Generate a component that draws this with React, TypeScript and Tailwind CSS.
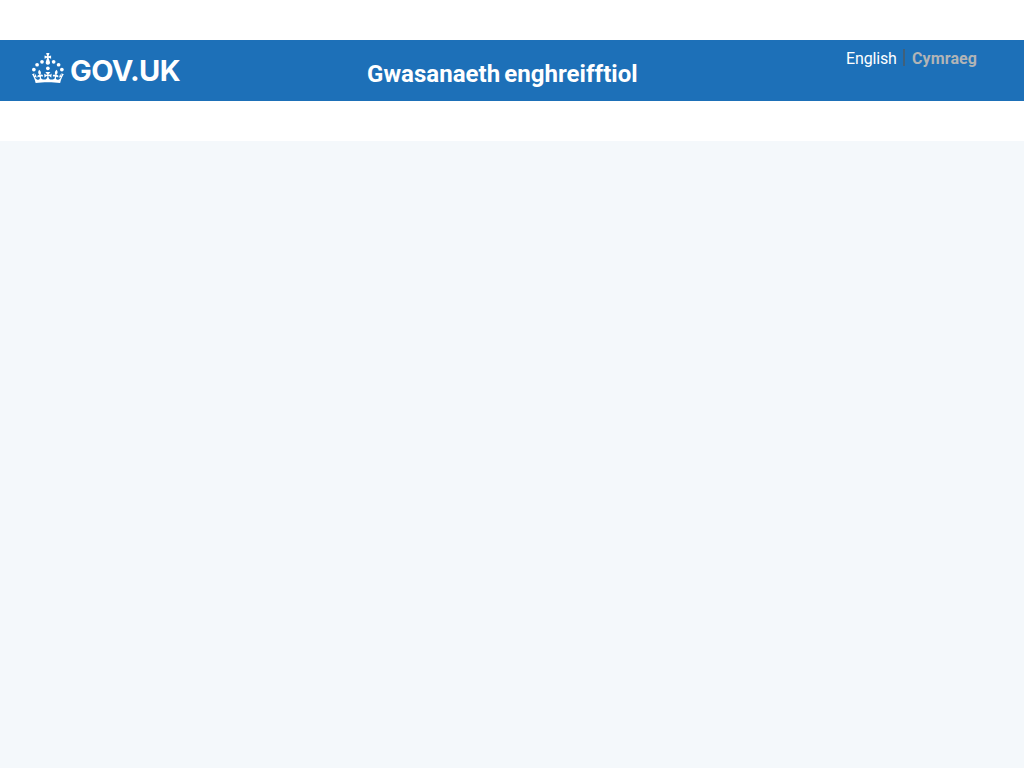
function Crown() {
  return (
    <svg width="32" height="30" viewBox="0 0 64 60" fill="currentColor" aria-hidden="true" className="shrink-0">
      <circle cx="20" cy="17.6" r="3.7" />
      <circle cx="10.2" cy="23.5" r="3.7" />
      <circle cx="3.7" cy="33.2" r="3.7" />
      <circle cx="31.7" cy="30.6" r="3.7" />
      <circle cx="43.3" cy="17.6" r="3.7" />
      <circle cx="53.2" cy="23.5" r="3.7" />
      <circle cx="59.7" cy="33.2" r="3.7" />
      <path d="M33.1,9.8c.2-.1.3-.3.5-.5l4.6,2.4v-6.8l-4.6,1.5c-.1-.2-.3-.3-.5-.5l1.9-5.9h-6.7l1.9,5.9c-.2.1-.3.3-.5.5l-4.6-1.5v6.8l4.6-2.4c.1.2.3.3.5.5l-2.6,8c-.9,2.8,1.2,5.7,4.1,5.7h0c3,0,5.1-2.9,4.1-5.7l-2.6-8ZM37,37.9s-3.4,3.8-4.1,6.1c2.2,0,4.2-.5,6.4-2.8l-.7,8.5c-2-2.8-4.4-4.1-5.7-3.8.1,3.1.5,6.7,5.8,7.2,3.7.3,6.7-1.5,7-3.8.4-2.6-2-4.3-3.7-1.6-1.4-4.5,2.4-6.1,4.9-3.2-1.9-4.5-1.8-7.7,2.4-10.9,3,4,2.6,7.3-1.2,11.1,2.4-1.3,6.2,0,4,4.6-1.2-2.8-3.7-2.2-4.2.2-.3,1.7.7,3.7,3,4.2,1.9.3,4.7-.9,7-5.9-1.3,0-2.4.7-3.9,1.7l2.4-8c.6,2.3,1.4,3.7,2.2,4.5.6-1.6.5-2.8,0-5.3l5,1.8c-2.6,3.6-5.2,8.7-7.3,17.5-7.4-1.1-15.7-1.7-24.5-1.7h0c-8.8,0-17.1.6-24.5,1.7-2.1-8.9-4.7-13.9-7.3-17.5l5-1.8c-.5,2.5-.6,3.7,0,5.3.8-.8,1.6-2.3,2.2-4.5l2.4,8c-1.5-1-2.6-1.7-3.9-1.7,2.3,5,5.2,6.2,7,5.9,2.3-.4,3.3-2.4,3-4.2-.5-2.4-3-3.1-4.2-.2-2.2-4.6,1.6-6,4-4.6-3.7-3.7-4.2-7.1-1.2-11.1,4.2,3.2,4.3,6.4,2.4,10.9,2.5-2.8,6.3-1.3,4.9,3.2-1.8-2.7-4.1-1-3.7,1.6.3,2.3,3.3,4.1,7,3.8,5.4-.5,5.7-4.2,5.8-7.2-1.3-.2-3.7,1-5.7,3.8l-.7-8.5c2.2,2.3,4.2,2.7,6.4,2.8-.7-2.3-4.1-6.1-4.1-6.1h10.6Z" />
    </svg>
  );
}

export default function App() {
  return (
    <div className="flex h-screen flex-col bg-[#f4f8fb] font-['Roboto',sans-serif]">
      <div className="bg-white py-10">
        <header className="flex h-[61px] items-start bg-[#1d70b8] pl-8 text-white">
          <a className="flex w-[335px] shrink-0 items-start pt-[13px]" aria-label="GOV.UK">
            <Crown />
            <span className="ml-[6px] mt-[2px] whitespace-nowrap font-['Inter',sans-serif] text-[29px] font-bold leading-8 tracking-[-0.6px]">GOV.UK</span>
          </a>
          <span className="mt-[19px] w-[479px] shrink-0 whitespace-nowrap text-2xl font-bold leading-[30px] tracking-[0.03px] [word-spacing:-1.8px]">Gwasanaeth enghreifftiol</span>
          <nav className="mt-[9px] flex whitespace-nowrap text-base leading-5">
            <a className="w-[57px] tracking-[-0.15px]">English</a>
            <span className="mr-[7px] h-[17px] w-0.5 bg-[#505a5f]/70" />
            <span className="font-bold tracking-[0.1px] text-[#b1b4b6]">Cymraeg</span>
          </nav>
        </header>
      </div>
      <main className="flex-1" />
    </div>
  );
}
